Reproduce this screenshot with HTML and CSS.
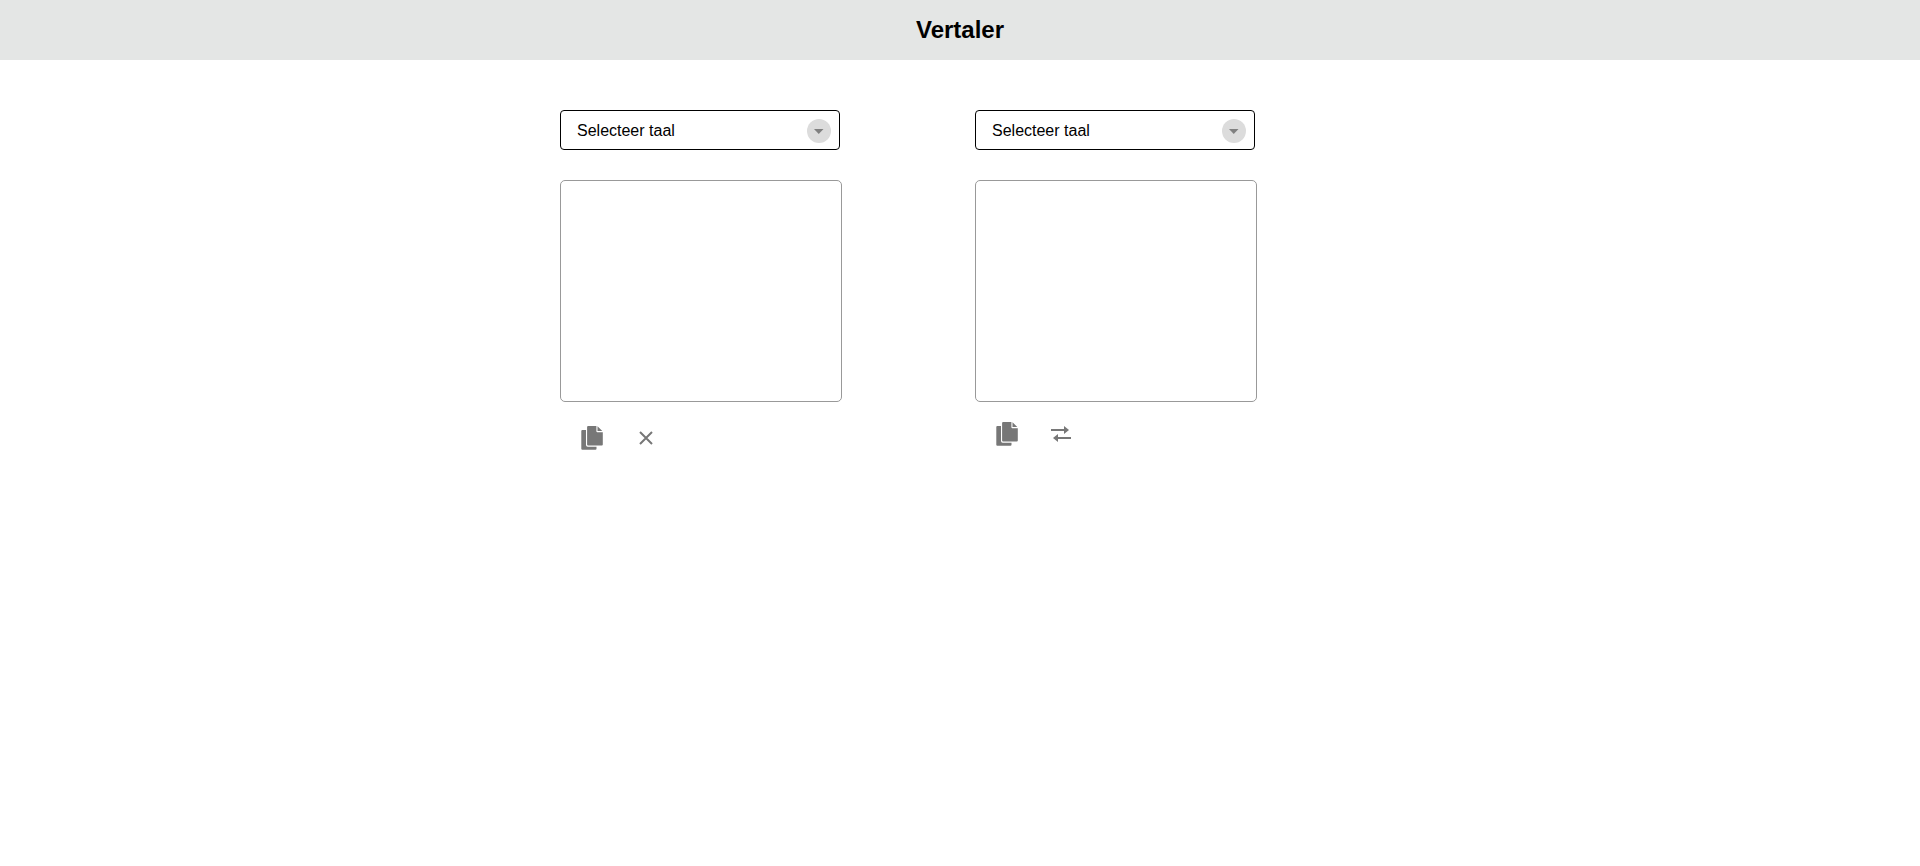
FILE: index.html
```html
<!DOCTYPE html>
<html lang="nl">
<head>
<meta charset="utf-8">
<meta name="viewport" content="width=device-width, initial-scale=1">
<title>Vertaler</title>
<link rel="stylesheet" href="styles.css">
</head>
<body>
<header class="header"><h1 class="title">Vertaler</h1></header>
<main class="translator">
  <section class="panel">
    <div class="picker">
      <select class="language" aria-label="Brontaal"><option>Selecteer taal</option></select>
      <svg class="arrow" viewBox="0 0 24 24" aria-hidden="true"><circle cx="12" cy="12" r="12" fill="#dcdcdc"/><path d="M7 10h9.500L11.750 15z" fill="#808080"/></svg>
    </div>
    <textarea class="text" aria-label="Brontekst"></textarea>
    <div class="actions actions-source">
      <button class="action" type="button" aria-label="Kopiëren"><svg width="22" height="24" viewBox="0 0 22 24"><path d="M0.300 5q0-1 1-1H5v15q0 1.700 1.700 1.700h8.800v2q0 1-1 1H1.300q-1 0-1-1zM6.100 1q0-1 1-1H15.400v5.200q0 1 1 1h5.400V18.500q0 1-1 1H7.100q-1 0-1-1zM16.500 0.200L21.300 5h-4.800z"/></svg></button>
      <button class="action" type="button" aria-label="Wissen"><svg width="14" height="14" viewBox="0 0 14 14"><path class="stroke" d="M1 1l12 12M13 1L1 13"/></svg></button>
    </div>
  </section>
  <section class="panel">
    <div class="picker">
      <select class="language" aria-label="Doeltaal"><option>Selecteer taal</option></select>
      <svg class="arrow" viewBox="0 0 24 24" aria-hidden="true"><circle cx="12" cy="12" r="12" fill="#dcdcdc"/><path d="M7 10h9.500L11.750 15z" fill="#808080"/></svg>
    </div>
    <textarea class="text" aria-label="Vertaling"></textarea>
    <div class="actions">
      <button class="action" type="button" aria-label="Kopiëren"><svg width="22" height="24" viewBox="0 0 22 24"><path d="M0.300 5q0-1 1-1H5v15q0 1.700 1.700 1.700h8.800v2q0 1-1 1H1.300q-1 0-1-1zM6.100 1q0-1 1-1H15.400v5.200q0 1 1 1h5.400V18.500q0 1-1 1H7.100q-1 0-1-1zM16.500 0.200L21.300 5h-4.800z"/></svg></button>
      <button class="action" type="button" aria-label="Omwisselen"><svg width="20" height="16" viewBox="0 0 20 16"><path d="M0 3h13V0l5 4-5 4V5H0zM20 13H7v3l-5-4 5-4v3h13z"/></svg></button>
    </div>
  </section>
</main>
</body>
</html>
```
FILE: styles.css
```css
* { box-sizing: border-box; }

body {
  margin: 0;
  background: #fff;
  color: #000;
  font-family: "Liberation Sans", Arial, sans-serif;
}

.header {
  padding: 16px;
  background: #e4e6e5;
  text-align: center;
}

.title {
  margin: 0;
  font-size: 24px;
  line-height: 28px;
}

.translator {
  display: grid;
  grid-template-columns: 1fr 1fr;
  gap: 30px;
  max-width: 800px;
  margin: 50px auto 0;
}

.panel {
  display: flex;
  flex-direction: column;
  align-items: flex-start;
}

.picker {
  display: grid;
  align-items: center;
  width: 280px;
  max-width: 100%;
}

.language {
  grid-area: 1 / 1;
  width: 100%;
  height: 40px;
  padding: 0 40px 0 16px;
  border: 1px solid #000;
  border-radius: 4px;
  background: #fff;
  color: #000;
  font-family: inherit;
  font-size: 16px;
  appearance: none;
}

.arrow {
  grid-area: 1 / 1;
  justify-self: end;
  width: 24px;
  height: 24px;
  margin: 2px 9px 0 0;
  pointer-events: none;
}

.text {
  display: block;
  width: 282px;
  max-width: 100%;
  height: 222px;
  margin-top: 30px;
  padding: 10px;
  border: 1px solid #999;
  border-radius: 5px;
  font-family: inherit;
  font-size: 16px;
  resize: none;
}

.actions {
  display: flex;
  gap: 22px;
  margin-top: 16px;
  padding-left: 16px;
}

.actions-source {
  margin-top: 20px;
}

.action {
  display: flex;
  align-items: center;
  justify-content: center;
  width: 32px;
  height: 32px;
  padding: 0;
  border: 0;
  background: none;
  fill: #777;
  cursor: pointer;
}

.stroke {
  fill: none;
  stroke: #777;
  stroke-width: 2;
}
```
